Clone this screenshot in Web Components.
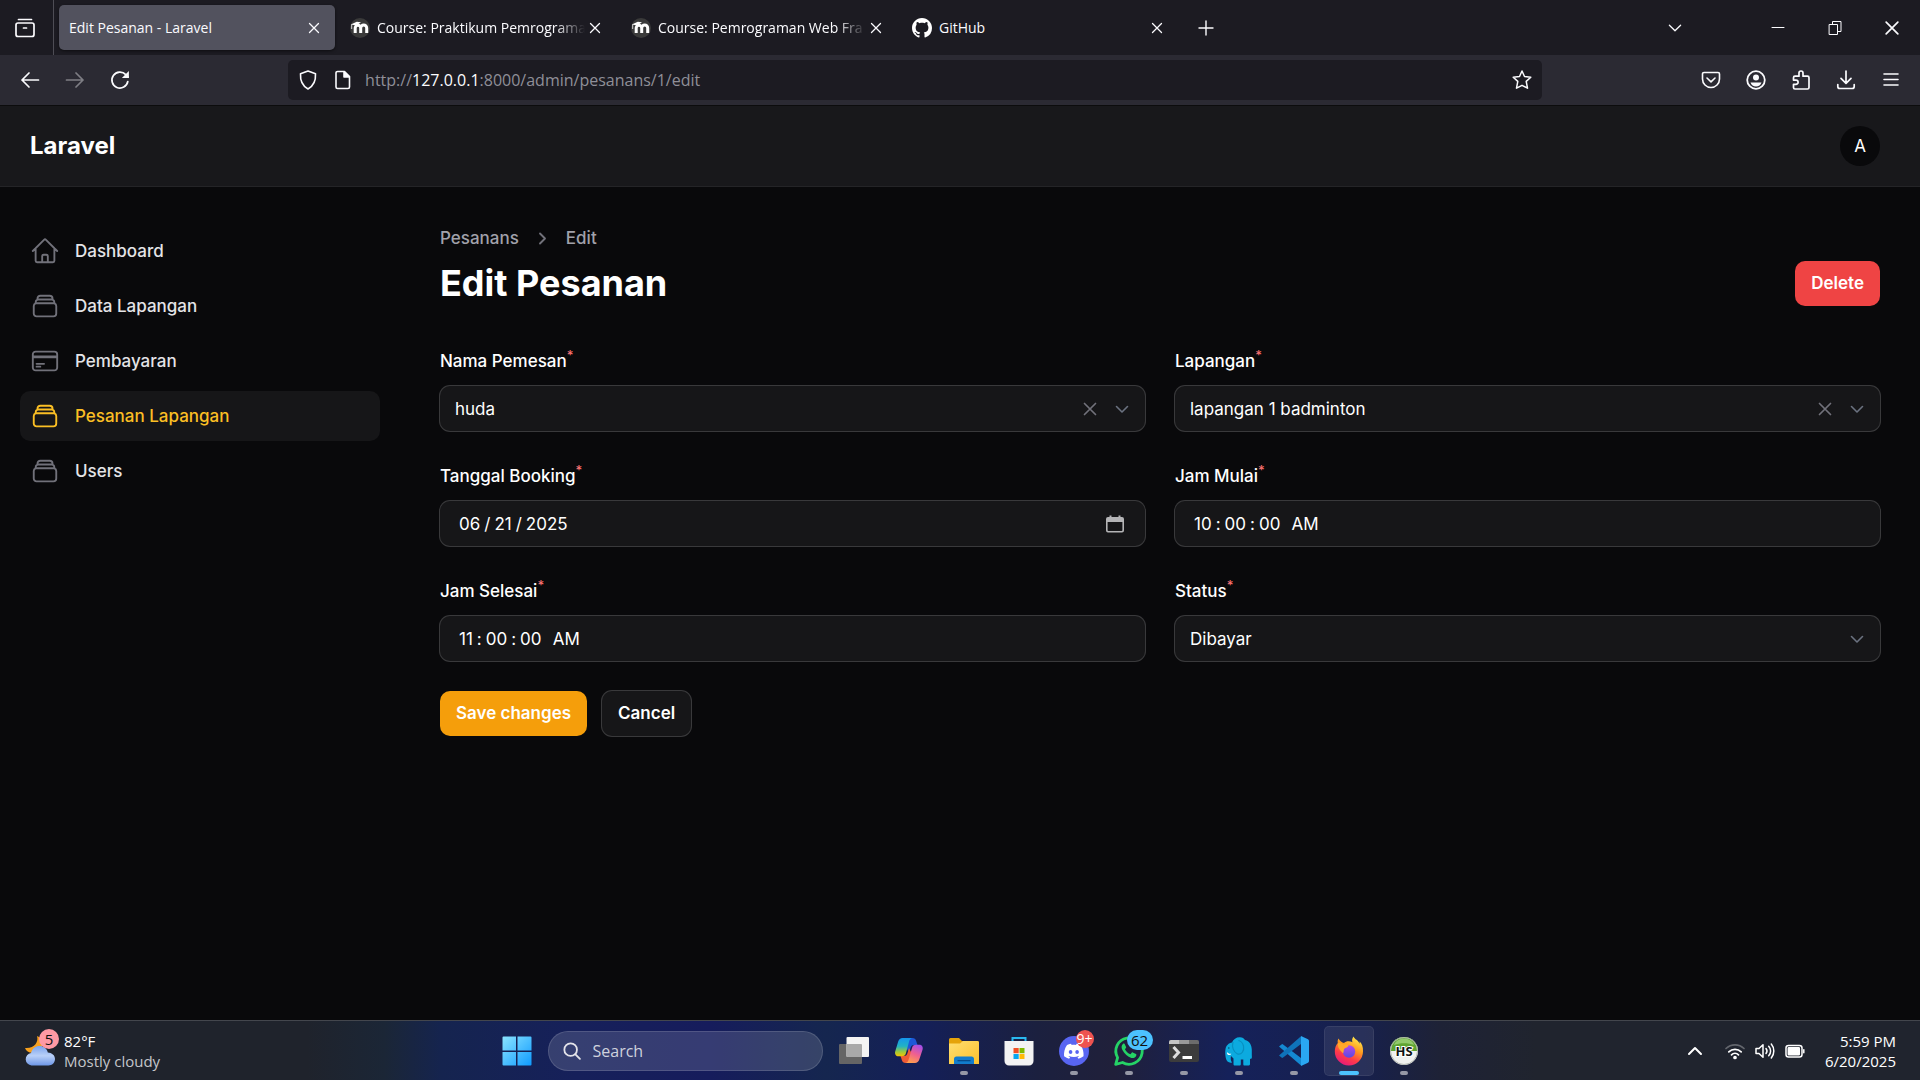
<!DOCTYPE html>
<html lang="id">
<head>
<meta charset="utf-8">
<title>Edit Pesanan - Laravel</title>
<style>
html, body { margin: 0; }
body {
  min-height: 100vh; display: flex; flex-direction: column;
  background: #09090b; color: #fff;
  font-family: Inter, "Liberation Sans", sans-serif; font-size: 17px;
  --chrome-font: "Open Sans", "Noto Sans", sans-serif;
}
app-page { flex: 1; }
</style>
</head>
<body>
<tab-strip>
  <browser-tab active label="Edit Pesanan - Laravel"></browser-tab>
  <browser-tab icon="moodle" label="Course: Praktikum Pemrograma"></browser-tab>
  <browser-tab icon="moodle" label="Course: Pemrograman Web Fra"></browser-tab>
  <browser-tab icon="github" label="GitHub"></browser-tab>
</tab-strip>
<nav-toolbar></nav-toolbar>
<app-header brand="Laravel" initial="A"></app-header>
<app-page>
  <side-nav slot="nav">
    <nav-item icon="home">Dashboard</nav-item>
    <nav-item icon="stack">Data Lapangan</nav-item>
    <nav-item icon="card">Pembayaran</nav-item>
    <nav-item icon="stack" active>Pesanan Lapangan</nav-item>
    <nav-item icon="stack">Users</nav-item>
  </side-nav>
  <page-heading title="Edit Pesanan" parent="Pesanans" current="Edit">
    <ui-button tone="danger">Delete</ui-button>
  </page-heading>
  <form-grid>
    <form-field type="select" clearable label="Nama Pemesan" value="huda"></form-field>
    <form-field type="select" clearable label="Lapangan" value="lapangan 1 badminton"></form-field>
    <form-field type="date" label="Tanggal Booking" value="2025-06-21"></form-field>
    <form-field type="time" label="Jam Mulai" value="10:00:00"></form-field>
    <form-field type="time" label="Jam Selesai" value="11:00:00"></form-field>
    <form-field type="select" label="Status" value="Dibayar"></form-field>
    <ui-button slot="actions" tone="primary">Save changes</ui-button>
    <ui-button slot="actions" tone="plain">Cancel</ui-button>
  </form-grid>
</app-page>
<task-bar>
  <task-app icon="taskview" label="Task View"></task-app>
  <task-app icon="copilot" label="Copilot"></task-app>
  <task-app icon="explorer" label="File Explorer" open></task-app>
  <task-app icon="store" label="Microsoft Store"></task-app>
  <task-app icon="discord" label="Discord" badge="9+" alert open></task-app>
  <task-app icon="whatsapp" label="WhatsApp" badge="62" open></task-app>
  <task-app icon="terminal" label="Terminal" open></task-app>
  <task-app icon="elephant" label="Database" open></task-app>
  <task-app icon="vscode" label="Code editor" open></task-app>
  <task-app icon="firefox" label="Firefox" open current></task-app>
  <task-app icon="hs" label="HeidiSQL" open></task-app>
</task-bar>

<script>
const line = (box, width, body) =>
  `<svg viewBox="0 0 ${box} ${box}" fill="none" stroke="currentColor" stroke-width="${width}" stroke-linecap="round" stroke-linejoin="round">${body}</svg>`;
const art = (box, body) => `<svg viewBox="0 0 ${box} ${box}">${body}</svg>`;

const ICONS = {
  home: line(24, 1.5, '<path d="m2.25 12 8.954-8.955c.44-.439 1.152-.439 1.591 0L21.75 12M4.5 9.75v10.125c0 .621.504 1.125 1.125 1.125H9.75v-4.875c0-.621.504-1.125 1.125-1.125h2.25c.621 0 1.125.504 1.125 1.125V21h4.125c.621 0 1.125-.504 1.125-1.125V9.75M8.25 21h8.25"/>'),
  stack: line(24, 1.5, '<path d="M6 6.878V6a2.25 2.25 0 0 1 2.25-2.25h7.5A2.25 2.25 0 0 1 18 6v.878m-12 0c.235-.083.487-.128.75-.128h10.5c.263 0 .515.045.75.128m-12 0A2.25 2.25 0 0 0 4.5 9v.878m13.5-3A2.25 2.25 0 0 1 19.5 9v.878m0 0a2.246 2.246 0 0 0-.75-.128H5.25c-.263 0-.515.045-.75.128m15 0A2.25 2.25 0 0 1 21 12v6a2.25 2.25 0 0 1-2.25 2.25H5.25A2.25 2.25 0 0 1 3 18v-6c0-.98.626-1.813 1.5-2.122"/>'),
  card: line(24, 1.5, '<path d="M2.25 8.25h19.5M2.25 9h19.5m-16.5 5.25h6m-6 2.25h3m-3.75 3h15a2.25 2.25 0 0 0 2.25-2.25V6.75A2.25 2.25 0 0 0 19.5 4.5h-15a2.25 2.25 0 0 0-2.25 2.25v10.5A2.25 2.25 0 0 0 4.5 19.5Z"/>'),
  crumb: line(20, 1.5, '<path d="m8 6 4 4-4 4"/>'),
  down: line(20, 1.6, '<path d="m4.500 7.500 5.500 5.500 5.500-5.500"/>'),
  clear: line(20, 1.7, '<path d="M4.500 4.500l11 11m0-11l-11 11"/>'),
  calendar: art(20, '<path fill="currentColor" fill-rule="evenodd" d="M4.5 1.5h2V3h7V1.5h2V3H17a2 2 0 0 1 2 2v11.500a2 2 0 0 1-2 2H3a2 2 0 0 1-2-2V5a2 2 0 0 1 2-2h1.500zM2.600 8v8.200c0 .4.300.7.700.7h13.400c.4 0 .7-.3.700-.7V8z"/>'),
  close: line(20, 1.3, '<path d="m5.500 5.500 9 9m0-9-9 9"/>'),
  plus: line(20, 1.4, '<path d="M10 3v14M3 10h14"/>'),
  chevron: line(20, 1.6, '<path d="m3 6.500 7 7 7-7"/>'),
  view: line(20, 1.700, '<rect x="1" y="5" width="18" height="13.500" rx="2"/><path d="M3.500 1.500h13M8.500 10h3"/>'),
  min: line(20, 1, '<path d="M4 9.500h12"/>'),
  restore: line(20, 1, '<path d="M4.500 6.500h8v10h-8zM7.500 6V3.500h8.500v10h-3"/>'),
  back: line(20, 1.700, '<path d="M18.500 10H2m7-7-7 7 7 7"/>'),
  forward: line(20, 1.700, '<path d="M1.500 10H18m-7-7 7 7-7 7"/>'),
  reload: line(20, 1.700, '<path d="M17.800 11.500A8 8 0 1 1 15.800 4.600L18 7"/><path fill="currentColor" stroke="none" d="M18.900 1v7h-7z"/>'),
  shield: line(20, 1.600, '<path d="M10 1 2.500 3.800c-.4 7 2 12.200 7.500 15.200 5.500-3 7.900-8.200 7.500-15.200z"/>'),
  doc: line(20, 1.600, '<path d="M4.500 1.500h7l5 5v10.500a1.500 1.500 0 0 1-1.500 1.500H4.500A1.500 1.500 0 0 1 3 17V3a1.500 1.500 0 0 1 1.500-1.500z"/><path fill="currentColor" d="M11 1.800v5.200h5.200z"/>'),
  star: line(20, 1.500, '<path d="m10 1 2.500 5.500 6.300.7-4.600 4.200 1.300 6.800L10 15.300l-5.500 2.900 1.300-6.800L1.200 7.200l6.300-.7z"/>'),
  pocket: line(20, 1.600, '<path d="M3 2.500h14A1.500 1.500 0 0 1 18.500 4v5a8.500 8.500 0 0 1-17 0V4A1.500 1.500 0 0 1 3 2.500z"/><path d="m6 8 4 3.800L14 8"/>'),
  account: art(20, '<circle cx="10" cy="10" r="8.800" fill="none" stroke="currentColor" stroke-width="1.800"/><circle cx="10" cy="7.500" r="3" fill="currentColor"/><path fill="currentColor" d="M4.500 12.500h11c-.8 2.600-2.900 4-5.500 4s-4.700-1.400-5.500-4z"/>'),
  puzzle: line(20, 1.700, '<path d="M4 6.200h4V3a2 2 0 0 1 4 0v3.200h4.500A1.500 1.500 0 0 1 18 7.700v9.800a1.500 1.500 0 0 1-1.500 1.500H4a1.500 1.500 0 0 1-1.500-1.500v-3.200H5a2 2 0 0 0 0-4.200H2.500V7.700A1.500 1.500 0 0 1 4 6.200z"/>'),
  download: line(20, 1.700, '<path d="M10 1v12M5 8.300l5 5 5-5M1.800 14.500v2a2 2 0 0 0 2 2h12.400a2 2 0 0 0 2-2v-2"/>'),
  menu: line(20, 1.600, '<path d="M3 4h14M3 9.500h14M3 15h14"/>'),
  github: art(16, '<path fill="#fff" d="M8 0C3.580 0 0 3.580 0 8c0 3.540 2.290 6.530 5.470 7.590.4.070.55-.17.55-.38 0-.19-.010-.82-.010-1.490-2.010.37-2.530-.49-2.690-.94-.090-.23-.48-.94-.82-1.130-.28-.15-.68-.52-.010-.53.63-.010 1.080.58 1.230.82.72 1.210 1.870.87 2.330.66.070-.52.28-.87.51-1.070-1.780-.2-3.640-.89-3.640-3.950 0-.87.31-1.590.82-2.150-.080-.2-.36-1.020.080-2.120 0 0 .67-.21 2.200.82.64-.18 1.320-.27 2-.27s1.360.090 2 .27c1.530-1.040 2.200-.82 2.200-.82.44 1.100.16 1.920.080 2.120.51.56.82 1.270.82 2.150 0 3.070-1.870 3.750-3.650 3.950.29.25.54.73.54 1.480 0 1.070-.010 1.930-.010 2.200 0 .21.15.46.55.38A8.010 8.010 0 0 0 16 8c0-4.420-3.580-8-8-8z"/>'),
  moodle: art(20, '<circle cx="10" cy="10" r="10" fill="#3a3a3a"/><path fill="none" stroke="#fff" stroke-width="3" d="M5.200 15V10a2.600 2.600 0 0 1 5.500 0v5M10.700 15V10a2.800 2.800 0 0 1 6 0v5"/><path fill="#fff" d="m.8 6.600 6-2.800 4.200.4-4.600 3.400z"/><path stroke="#fff" stroke-width=".8" d="M1.700 6.500v4.500"/>'),
  windows: art(30, '<defs><linearGradient id="g" x1="0" y1="0" x2="1" y2="1" gradientUnits="objectBoundingBox"><stop stop-color="#8be4ff"/><stop offset="1" stop-color="#0f9bff"/></linearGradient></defs><path fill="url(#g)" d="M1.500.5H14v14H.5v-13a1 1 0 0 1 1-1zM15.500.5h13a1 1 0 0 1 1 1v13h-14zM.5 16H14v13.500H1.500a1 1 0 0 1-1-1zM15.500 16h14v12.500a1 1 0 0 1-1 1h-13z"/>'),
  search: line(20, 2, '<circle cx="8.500" cy="8.500" r="7"/><path d="m13.800 13.800 5 5"/>'),
  taskview: art(30, '<rect y="8" width="23" height="20" rx="1" fill="#656565"/><rect x="7.500" y="1" width="22.500" height="20" rx="1" fill="#f4f4f4"/><path fill="#a9a9a9" d="M7.500 8H22a1 1 0 0 1 1 1v12H8.500a1 1 0 0 1-1-1z"/>'),
  copilot: art(30, '<defs><linearGradient id="a" x1="0" y1="0" x2="0" y2="1"><stop stop-color="#1595ee"/><stop offset=".45" stop-color="#21b3c4"/><stop offset=".75" stop-color="#9cc93d"/><stop offset="1" stop-color="#f5c400"/></linearGradient><linearGradient id="b" x1=".7" y1="0" x2=".3" y2="1"><stop stop-color="#a54ee8"/><stop offset=".5" stop-color="#f0608f"/><stop offset="1" stop-color="#ffa04d"/></linearGradient></defs><path fill="#1d58d8" d="M14 2h4.500c2 0 3 1 3.500 2.500L23.500 9H20c-2 0-3 1-3.500 3L15 17l-3-6z"/><path fill="#ee5b35" d="M16 27h-4.500c-2 0-3-1-3.500-2.500L6.500 20H10c2 0 3-1 3.500-3l1.500-5 3 6z"/><path fill="url(#a)" d="M8.500 2H18c-1.500.5-2.300 1.500-2.800 3L12 17c-.6 2.200-1.800 3.300-4 3.300H4.500C1.800 20.300.500 18 1.200 15.500l3-10C5 3.200 6.400 2 8.500 2z"/><path fill="url(#b)" d="M21 27h-9.300c1.500-.5 2.300-1.500 2.800-3L18 12c.6-2.200 1.800-3.300 4-3.300h3.300c2.700 0 4 2.300 3.300 4.800l-3.300 10C24.500 25.800 23.100 27 21 27z"/>'),
  explorer: art(30, '<defs><linearGradient id="a" x1="0" y1="0" x2="1" y2="1"><stop stop-color="#ffdf72"/><stop offset="1" stop-color="#fcc02c"/></linearGradient></defs><path fill="#e5a30a" d="M0 3.500A1.500 1.500 0 0 1 1.500 2H10l3 3h15.500A1.500 1.500 0 0 1 30 6.500V12H0z"/><path fill="url(#a)" d="M0 7.500h11L14 5h14.500A1.500 1.500 0 0 1 30 6.500V28H0z"/><path fill="#127ccd" d="M5 28v-5a2.500 2.500 0 0 1 2.500-2.500h15A2.500 2.500 0 0 1 25 23v5z"/><path fill="#064b8c" d="M8.500 24h13v1.300h-13z"/>'),
  store: art(30, '<path fill="none" stroke="#29b8ef" stroke-width="2" d="M8.500 6V2h13v4"/><path fill="#f3f3f3" d="M.500 5h29v20a4.500 4.500 0 0 1-4.500 4.500H5A4.500 4.500 0 0 1 .500 25z"/><path fill="#f04f24" d="M9.500 12h5.200v5.200H9.500z"/><path fill="#7fba00" d="M15.500 12h5v5.200h-5z"/><path fill="#05a6f0" d="M9.500 18h5.200v5H9.500z"/><path fill="#ffba08" d="M15.500 18h5v5h-5z"/>'),
  discord: art(30, '<circle cx="15" cy="15" r="15" fill="#5865f2"/><g transform="translate(5 5.500) scale(.82)"><path fill="#fff" d="M20.317 4.370a19.790 19.790 0 0 0-4.885-1.515.074.074 0 0 0-.079.037c-.211.375-.445.865-.608 1.250-1.845-.276-3.680-.276-5.487 0-.164-.393-.406-.874-.618-1.250a.077.077 0 0 0-.079-.037 19.740 19.740 0 0 0-4.885 1.515C.533 9.046-.319 13.580.099 18.058c2.053 1.508 4.073 2.479 6.108 3.058.462-.63.873-1.295 1.226-1.994l-1.990-1.126.450-.302c3.928 1.793 8.180 1.793 12.061 0l.450.302-1.923 1.126c.360.698.772 1.363 1.225 1.993 1.961-.607 4.006-1.550 6.090-3.057.5-5.177-.838-9.674-3.479-13.688zM8.020 15.331c-1.183 0-2.157-1.086-2.157-2.419s.956-2.419 2.157-2.419c1.211 0 2.176 1.095 2.157 2.419 0 1.333-.956 2.419-2.157 2.419zm7.975 0c-1.183 0-2.157-1.086-2.157-2.419s.955-2.419 2.157-2.419c1.211 0 2.176 1.095 2.157 2.419 0 1.333-.946 2.419-2.157 2.419z"/></g>'),
  whatsapp: art(30, '<path fill="none" stroke="#25d366" stroke-width="2.800" stroke-linejoin="round" d="M1.700 28.300l1.900-6.700A13.200 13.200 0 1 1 8.500 26.500z"/><path fill="#25d366" d="M10.600 8c-.5-.6-1.200-.5-1.700 0-1.600 1.600-1.700 3.800-.5 6 2.200 4 5.200 6.700 9 7.900 2 .6 4-.3 4.800-2.200.3-.9.200-1.500-.2-1.700l-3.300-1.600c-.4-.2-.7 0-1 .300l-1.200 1.500c-2.500-.9-4.500-2.700-5.600-5l1-1.200c.3-.4.300-.7.200-1z"/>'),
  terminal: art(30, '<rect y="4" width="30" height="22" rx="2" fill="#3c3c3c"/><path fill="#c4c4c4" d="M2 4h8v4H0V6a2 2 0 0 1 2-2z"/><path fill="#999" d="M10 4h10v4H10z"/><path fill="#6c6c6c" d="M20 4h8a2 2 0 0 1 2 2v2H20z"/><path fill="none" stroke="#dcdcdc" stroke-width="3" d="m4.500 11 5 5.500-5 5.500"/><path fill="#fff" d="M13.500 20H23v3h-9.500z"/>'),
  elephant: art(30, '<path fill="#0caadf" d="M8 6.500C9.500 3 12.500 1 16 1.200c2.500.2 4 1.200 5 2.800 4.500 1 6.800 5 6.800 10v5c0 1.500.4 2.500-.3 3.500-.5.7-1.200.5-1.500 0v5.500c0 1-.8 1.500-2 1.500h-3.500c-.8 0-1.200-.5-1.200-1.500v-4.500h-2.500V28c0 1-.5 1.500-1.500 1.500H11c-1 0-1.500-.5-1.500-1.500v-5.500L7 20c-.5 2.500-.5 4.500 1 6.500-3 .8-5.500-1-6.200-4.500-.6-3-.8-6-.3-9 .6-3.500 3.200-6 6.500-6.500z"/><path fill="none" stroke="#078fc0" stroke-width="1.200" d="M9 6c-1.500 5 .5 10 4.500 12 4 1 7-3 6-8-.8-3-2.500-5-5-5.500"/><path fill="#fff" d="M3.500 16c.5 1.500 2 2.200 3.800 1.700-.8 1.800-3.400 1.800-4.300-.2z"/><circle cx="4.800" cy="12" r=".8" fill="#034e6e"/>'),
  vscode: art(30, '<path fill="#1489d2" d="M0 10.500 2.500 8.400a1.300 1.300 0 0 1 1.600 0L22 22v7.500z"/><path fill="#0f73ba" d="M0 19.500 22 .300V8L4.100 21.600a1.300 1.300 0 0 1-1.600 0z"/><path fill="#2aa7f2" d="m22 0 7 3.300c.6.300 1 .9 1 1.600v20.200c0 .7-.4 1.300-1 1.600L22 30z"/>'),
  firefox: art(30, '<defs><linearGradient id="a" x1=".8" y1="0" x2=".3" y2="1"><stop stop-color="#fff04f"/><stop offset=".4" stop-color="#ff9a1f"/><stop offset=".7" stop-color="#ff3b48"/><stop offset="1" stop-color="#e4197c"/></linearGradient><linearGradient id="b" x1=".5" y1="0" x2=".5" y2="1"><stop stop-color="#b548e8"/><stop offset="1" stop-color="#5a4be0"/></linearGradient></defs><path fill="url(#a)" d="M19.500.500c-1.500 2-1.800 4-1 5.800C15.500 4.500 12 5 10 7 8 6.800 5.800 5 4.500 2.500 3.600 4 3.500 5.500 3.800 7 1.800 9.200.8 12 .8 15.300a14.100 14.100 0 0 0 28.200.3c.2-4.600-1-8-3.500-10.300.2 1 .2 1.700.1 2.500C24.500 4 20.500 3.500 19.500.500z"/><circle cx="15" cy="15.500" r="6.200" fill="url(#b)"/><path fill="#ffa92b" d="M4 7c2.500 0 4 .3 5.500 1.300 2 0 4 .2 5 1.200-.5 2-3 2-4.200 3.200-.8 1-.3 3-1.200 4.500-2-2-6-5-5.100-10.200z"/>'),
  hs: art(30, '<circle cx="15" cy="15" r="14" fill="#f0f1ef"/><path fill="#5fa531" d="M1.200 15C1.200 6.500 7.500 1 15 1s13.800 5.500 13.800 14z"/><path fill="#92c96c" d="M5 9c1.500-4 5.500-6.500 10-6.500S23.500 5 25 9c-6-2.500-14-2.500-20 0z"/><circle cx="15" cy="15" r="13.500" fill="none" stroke="#b4b8b1"/><text x="15" y="19.500" text-anchor="middle" font-family="Open Sans, sans-serif" font-weight="700" font-size="13" fill="#111" stroke="#fff" stroke-width="2" paint-order="stroke">HS</text>'),
  weather: art(30, '<defs><linearGradient id="a" x1="0" y1="0" x2="0" y2="1"><stop stop-color="#7ba3ec"/><stop offset=".5" stop-color="#b9d0f8"/><stop offset="1" stop-color="#6d96e6"/></linearGradient></defs><path fill="#f6a01e" d="M12 0c2 6-3 13-12 12 1.500 5 8 6 13 3s6-9 3-13z"/><path fill="url(#a)" d="M6.500 29.500a6.300 6.300 0 0 1-.5-12.500c1.200-4.500 4.500-7 8.500-7s7.500 2.500 8.300 6.500c4 .2 7.200 2.800 7.200 6.500s-3 6.500-6.500 6.500z"/>'),
  up: line(20, 2, '<path d="m4 13 6-6 6 6"/>'),
  wifi: line(20, 1.700, '<path opacity=".3" d="M1 7.500a13 13 0 0 1 18 0"/><path d="M3.800 10.800a9 9 0 0 1 12.400 0M6.500 13.800a5 5 0 0 1 7 0"/><circle cx="10" cy="16.500" r="1" fill="currentColor"/>'),
  volume: line(20, 1.500, '<path d="M1 7.500v5h3l4 3.800V3.700l-4 3.800zM11 7.500a4 4 0 0 1 0 5M13.700 5.200a7 7 0 0 1 0 9.600M16.300 3a11 11 0 0 1 0 14"/>'),
  battery: line(20, 1.500, '<rect x="1" y="4.500" width="16" height="11.500" rx="2.500"/><rect x="3.300" y="6.800" width="11" height="7" rx=".5" fill="currentColor"/><path d="M18.800 8.800v3"/>')
};

/* Shared base: fills an open shadow root with styles and markup. */
class Base extends HTMLElement {
  connectedCallback() {
    if (this.shadowRoot) return;
    const t = document.createElement('template');
    t.innerHTML = `<style>
      :host, *, *::before, *::after { box-sizing: border-box; }
      button, input, select { font: inherit; color: inherit; margin: 0; border: 0; padding: 0; background: none; }
      a { color: inherit; text-decoration: none; }
      button { display: inline-flex; align-items: center; justify-content: center; cursor: pointer; }
      ${this.css()}</style>${this.html()}`;
    this.attachShadow({ mode: 'open' }).append(t.content.cloneNode(true));
  }
  at(n) { return this.getAttribute(n) || ''; }
}
const define = (name, css, html) =>
  customElements.define(name, class extends Base {
    css() { return css; }
    html() { return html(this); }
  });

define('ui-icon', `
  :host { display: block; flex: none; width: var(--size, 20px); height: var(--size, 20px); }
  svg { display: block; width: 100%; height: 100%; overflow: visible; }`,
  e => ICONS[e.at('name')]);

define('tab-strip', `
  :host { display: flex; align-items: center; height: 55px; background: #1c1b22; color: #fbfbfe; font: 14px/20px var(--chrome-font); }
  .view { width: 53px; height: 55px; padding-right: 4px; }
  .tabs { display: flex; gap: 5px; padding: 0 5px; border-left: 1px solid #4e4d55; height: 55px; align-items: center; }
  .new { width: 45px; height: 45px; }
  .all { width: 45px; height: 45px; margin: 0 52px 0 auto; --size: 16px; }
  .win { width: 57px; height: 55px; }`,
  () => `<button class="view" aria-label="Firefox View"><ui-icon name="view"></ui-icon></button>
  <div class="tabs"><slot></slot></div>
  <button class="new" aria-label="New tab"><ui-icon name="plus"></ui-icon></button>
  <button class="all" aria-label="List all tabs"><ui-icon name="chevron"></ui-icon></button>
  <button class="win" aria-label="Minimize"><ui-icon name="min"></ui-icon></button>
  <button class="win" aria-label="Restore"><ui-icon name="restore"></ui-icon></button>
  <button class="win" aria-label="Close"><ui-icon name="close" style="--size:26px"></ui-icon></button>`);

define('browser-tab', `
  :host { display: flex; align-items: center; width: 276px; height: 45px; border-radius: 5px; padding: 0 11px 0 10px; }
  :host([active]) { background: #52525e; box-shadow: 0 1px 3px #0008; }
  ui-icon[name=moodle], ui-icon[name=github] { margin-right: 7px; }
  .label { flex: 1; overflow: hidden; white-space: nowrap; }
  :host([icon=moodle]) .label { -webkit-mask-image: linear-gradient(to left, transparent, #000 30px); }
  button { width: 20px; height: 30px; }`,
  e => `${e.at('icon') ? `<ui-icon name="${e.at('icon')}"></ui-icon>` : ''}
  <span class="label">${e.at('label')}</span>
  <button aria-label="Close tab"><ui-icon name="close"></ui-icon></button>`);

define('nav-toolbar', `
  :host { display: flex; align-items: center; height: 51px; padding: 0 7px; background: #2b2a33; border-bottom: 1px solid #0c0c0d; color: #fbfbfe; font: 16px/24px var(--chrome-font); }
  button { width: 45px; height: 40px; flex: none; }
  .dim { opacity: .4; }
  .gap { flex: 146; }
  .url { flex: 1253; display: flex; align-items: center; height: 40px; border-radius: 5px; background: #1c1b22; }
  .url button { width: 30px; }
  .url button:first-child { width: 40px; }
  .url button:last-child { width: 40px; }
  .addr { flex: 1; padding-left: 7px; color: #8f8f98; white-space: nowrap; }
  .addr b { font-weight: 400; color: #fbfbfe; }`,
  () => `<button aria-label="Back"><ui-icon name="back"></ui-icon></button>
  <button class="dim" aria-label="Forward"><ui-icon name="forward"></ui-icon></button>
  <button aria-label="Reload"><ui-icon name="reload"></ui-icon></button>
  <span class="gap"></span>
  <div class="url">
    <button aria-label="Tracking protection"><ui-icon name="shield"></ui-icon></button>
    <button aria-label="Site information"><ui-icon name="doc"></ui-icon></button>
    <a class="addr" href="#">http://<b>127.0.0.1</b>:8000/admin/pesanans/1/edit</a>
    <button aria-label="Bookmark"><ui-icon name="star"></ui-icon></button>
  </div>
  <span class="gap"></span>
  ${['pocket', 'account', 'puzzle', 'download', 'menu'].map(n => `<button aria-label="${n}"><ui-icon name="${n}"></ui-icon></button>`).join('')}`);

define('app-header', `
  :host { display: flex; align-items: center; justify-content: space-between; height: 81px; padding: 0 40px 0 30px; background: #18181b; border-bottom: 1px solid #242427; }
  a { font-size: 24px; line-height: 30px; font-weight: 700; }
  button { width: 40px; height: 40px; border-radius: 50%; background: #09090b; font-size: 17px; }`,
  e => `<a href="#">${e.at('brand')}</a><button aria-label="User menu">${e.at('initial')}</button>`);

define('app-page', `
  :host { display: grid; grid-template-columns: 400px minmax(0, 1fr); }
  main { padding: 39px 40px; }`,
  () => `<slot name="nav"></slot><main><slot></slot></main>`);

define('side-nav', `
  :host { display: block; padding: 39px 20px; }
  nav { display: flex; flex-direction: column; gap: 5px; }`,
  () => `<nav><slot></slot></nav>`);

define('nav-item', `
  :host { display: block; color: #e4e4e7; font-size: 17px; line-height: 30px; font-weight: 500; --size: 30px; }
  a { display: flex; align-items: center; gap: 15px; padding: 10px; border-radius: 10px; }
  ui-icon { color: #71717a; }
  :host([active]) a { background: #161618; color: #fbbf24; }
  :host([active]) ui-icon { color: #fbbf24; }`,
  e => `<a href="#"><ui-icon name="${e.at('icon')}"></ui-icon><slot></slot></a>`);

define('page-heading', `
  :host { display: flex; align-items: flex-end; justify-content: space-between; margin-bottom: 40px; }
  .crumbs { display: flex; align-items: center; gap: 11px; margin-bottom: 10px; font-size: 17px; line-height: 25px; font-weight: 500; color: #a1a1aa; --size: 25px; }
  ui-icon { color: #71717a; }
  h1 { margin: 0; font-size: 36px; line-height: 45px; font-weight: 700; }`,
  e => `<div><nav class="crumbs"><a href="#">${e.at('parent')}</a><ui-icon name="crumb"></ui-icon><a href="#">${e.at('current')}</a></nav>
  <h1>${e.at('title')}</h1></div><slot></slot>`);

define('ui-button', `
  :host { display: block; font-size: 17px; line-height: 25px; font-weight: 600; }
  button { padding: 10px 16px; border-radius: 10px; white-space: nowrap; }
  :host([tone=danger]) button { background: #ef4444; }
  :host([tone=primary]) button { background: #f59e0b; }
  :host([tone=plain]) button { background: #161618; box-shadow: 0 0 0 1px #39393b; }`,
  () => `<button type="button"><slot></slot></button>`);

define('form-grid', `
  :host { display: block; }
  .fields { display: grid; grid-template-columns: repeat(2, minmax(0, 1fr)); gap: 30px; }
  .actions { display: flex; gap: 15px; margin-top: 30px; }`,
  () => `<div class="fields"><slot></slot></div><div class="actions"><slot name="actions"></slot></div>`);

define('form-field', `
  :host { display: flex; flex-direction: column; gap: 10px; line-height: 30px; font-size: 17px; }
  label { font-weight: 500; }
  sup { color: #f87171; font-size: 13px; line-height: 0; }
  .box { display: flex; align-items: center; height: 45px; border-radius: 10px; background: #161618; box-shadow: 0 0 0 1px #39393b; color: #fff; --size: 20px; }
  .box > :first-child { flex: 1; min-width: 0; height: 45px; padding: 0 15px; outline: 0; }
  select { appearance: none; }
  option { background: #18181b; }
  .box > button { width: 32px; height: 45px; color: #71717a; }
  .box > .down { color: #6b7280; margin: 0 7px 0 0; }
  .box > .cal { width: 32px; color: #b4b4b6; margin-right: 14px; }
  input { color-scheme: dark; }
  input::-webkit-calendar-picker-indicator { display: none; }
  .box > input:first-child { padding: 0 18px; }
  input::-webkit-datetime-edit-fields-wrapper, input::-webkit-datetime-edit { padding: 0; }
  input::-webkit-datetime-edit-text { padding: 0 3px; }
  input::-webkit-datetime-edit-ampm-field { padding: 0 1px; }`,
  e => {
    const type = e.at('type'), value = e.at('value');
    const control = type === 'select'
      ? `<select id="c" required><option selected>${value}</option></select>
         ${e.hasAttribute('clearable') ? '<button type="button" aria-label="Clear"><ui-icon name="clear"></ui-icon></button>' : ''}
         <button type="button" class="down" aria-label="Open list"><ui-icon name="down"></ui-icon></button>`
      : `<input id="c" type="${type}" value="${value}" ${type === 'time' ? 'step="1"' : ''} required>
         ${type === 'date' ? '<button type="button" class="cal" aria-label="Open calendar"><ui-icon name="calendar"></ui-icon></button>' : ''}`;
    return `<label for="c">${e.at('label')}<sup>*</sup></label><div class="box">${control}</div>`;
  });

define('task-bar', `
  :host { display: grid; grid-template-columns: 1fr auto 1fr; align-items: center; height: 60px; border-top: 1px solid #43464d; color: #fff; font: 15px/20px var(--chrome-font);
    background: linear-gradient(90deg, #1f232c 0 16%, #1b2636 20%, #15244f 23%, #16205a 30%, #161c5c 37%, #15264f 43%, #141f58 48%, #1b203f 54%, #20203a 58%, #15215a 64%, #17204c 71%, #1e2236 75%, #20242e 80%); }
  .weather { display: flex; align-items: center; gap: 9px; padding-left: 25px; --size: 30px; text-align: left; justify-self: start; }
  .weather span { display: flex; flex-direction: column; }
  .weather small { font-size: 15px; color: #c4c6ca; }
  .pic { position: relative; }
  .pic b { position: absolute; top: -7px; left: 14px; width: 20px; height: 20px; border-radius: 50%; background: #ff99a4; color: #111; font-weight: 400; text-align: center; }
  .apps { display: flex; align-items: center; gap: 5px; }
  .start { width: 51px; height: 50px; --size: 30px; }
  .search { display: flex; align-items: center; gap: 12px; width: 275px; height: 40px; border-radius: 20px; padding: 0 14px; border: 1px solid #ffffff22; background: #ffffff24; color: #e4e4ea; margin-right: 1px; --size: 18px; }
  input { flex: 1; min-width: 0; outline: 0; font-size: 16px; }
  input::placeholder { color: #cfd2dd; opacity: 1; }
  .tray { display: flex; align-items: center; justify-content: flex-end; padding-right: 24px; }
  .tray button { width: 30px; height: 40px; }
  .tray .up { width: 40px; margin-right: 5px; --size: 20px; }
  .clock { display: flex; flex-direction: column; text-align: right; margin-left: 15px; min-width: 70px; }`,
  () => `<button class="weather"><span class="pic"><ui-icon name="weather"></ui-icon><b>5</b></span><span>82°F<small>Mostly cloudy</small></span></button>
  <div class="apps"><button class="start" aria-label="Start"><ui-icon name="windows"></ui-icon></button>
    <label class="search"><ui-icon name="search"></ui-icon><input type="text" placeholder="Search" aria-label="Search"></label><slot></slot></div>
  <div class="tray"><button class="up" aria-label="Hidden icons"><ui-icon name="up"></ui-icon></button>
    <button aria-label="Network"><ui-icon name="wifi"></ui-icon></button>
    <button aria-label="Volume"><ui-icon name="volume"></ui-icon></button>
    <button aria-label="Battery"><ui-icon name="battery"></ui-icon></button>
    <div class="clock"><span>5:59 PM</span><span>6/20/2025</span></div></div>`);

define('task-app', `
  :host { display: block; position: relative; --size: 30px; }
  button { width: 50px; height: 50px; border-radius: 5px; }
  :host([current]) button { background: #ffffff14; box-shadow: inset 0 0 0 1px #ffffff12; }
  :host([open])::after { content: ""; position: absolute; left: 21px; bottom: 1px; width: 8px; height: 4px; border-radius: 2px; background: #9698a6; }
  :host([current])::after { left: 15px; width: 20px; background: #4cc2ff; }
  b { position: absolute; top: 4px; left: 23px; min-width: 26px; height: 20px; border-radius: 10px; background: #4cc2ff; color: #111; font-weight: 400; line-height: 20px; text-align: center; }
  :host([alert]) b { left: 27px; min-width: 18px; height: 18px; line-height: 17px; background: #ee5350; color: #fff; font-size: 14px; }`,
  e => `<button aria-label="${e.at('label')}"><ui-icon name="${e.at('icon')}"></ui-icon>${e.at('badge') ? `<b>${e.at('badge')}</b>` : ''}</button>`);
</script>
</body>
</html>
